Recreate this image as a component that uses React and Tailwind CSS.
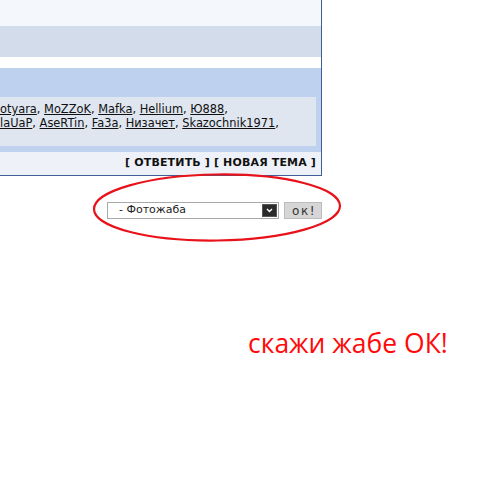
import React from 'react';

const names1 = ['otyara', 'MoZZoK', 'Mafka', 'Hellium', 'Ю888'];
const names2 = ['laUaP', 'AseRTin', 'Fa3a', 'Низачет', 'Skazochnik1971'];

const NameList = ({ names }) => (
  <div className="whitespace-nowrap">
    {names.map((n) => (
      <span key={n}>
        <a className="underline text-[#111]">{n}</a>,{' '}
      </span>
    ))}
  </div>
);

const ForumBox = () => (
  <div className="w-[322px] border-r border-b border-[#3f5f95] font-['DejaVu_Sans',sans-serif] text-[11px] text-[#111]">
    <div className="h-[26px] bg-[#f4f7fb]" />
    <div className="h-[31px] bg-[#d2dcea]" />
    <div className="h-[11px] bg-white" />
    <div className="bg-[#bed1ee] pt-[29px] pr-[5px] pb-[6px]">
      <div className="h-[49px] bg-[#dfe6f0] pt-[5px] leading-[14px] text-[11.4px] overflow-hidden">
        <NameList names={names1} />
        <NameList names={names2} />
      </div>
    </div>
    <div className="h-[23px] bg-[#eef2f8] flex items-center justify-end pr-[5px] text-[11px] font-bold tracking-[0.15px]">
      [ ОТВЕТИТЬ ] [ НОВАЯ ТЕМА ]
    </div>
  </div>
);

const Jump = () => (
  <div className="flex gap-[5px] pl-[107px] mt-[26px] font-['DejaVu_Sans',sans-serif] text-[11px]">
    <div className="w-[172px] h-[17px] border border-[#a8a8a8] bg-white flex items-center justify-between pl-[11px] pr-[1px] text-[#222]">
      <span>- Фотожаба</span>
      <span className="w-[15px] h-[13px] bg-[#2b2b2b] border border-[#555] flex items-center justify-center">
        <svg width="7" height="5" viewBox="0 0 7 5">
          <path d="M1 1 L3.5 3.5 L6 1" stroke="#fff" strokeWidth="1.4" fill="none" />
        </svg>
      </span>
    </div>
    <button className="w-[38px] h-[17px] bg-[#d6d6d6] border border-[#bcbcbc] text-[#333] text-[12px] leading-none tracking-[1.5px] pl-[2px]">
      ок!
    </button>
  </div>
);

export default function App() {
  return (
    <div className="relative w-[482px] h-[482px] bg-white overflow-hidden">
      <ForumBox />
      <Jump />
      <div className="ml-[248px] mt-[111px] text-[26.5px] leading-none text-[#ff0a0a] font-['Open_Sans',sans-serif]">
        скажи жабе ОК!
      </div>
      <svg className="absolute left-0 top-0 pointer-events-none" width="482" height="482">
        <ellipse cx="217" cy="207.5" rx="123" ry="33" fill="none" stroke="#e8121a" strokeWidth="2.2" transform="rotate(-0.8 217 207.5)" />
      </svg>
    </div>
  );
}
